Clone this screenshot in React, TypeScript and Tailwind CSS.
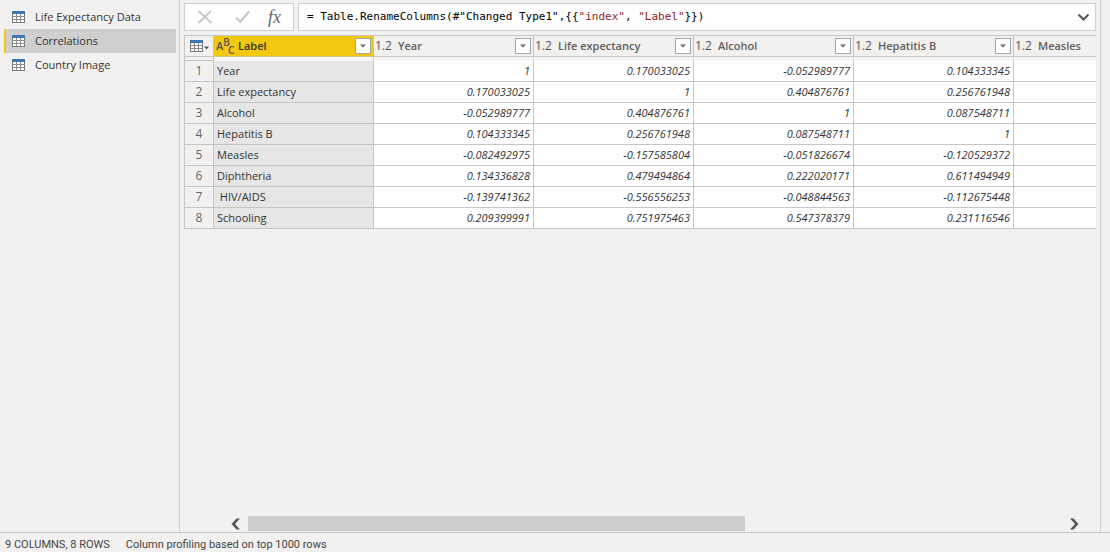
import React from 'react';

const queries = ['Life Expectancy Data', 'Correlations', 'Country Image'];
const numericColumns = ['Year', 'Life expectancy', 'Alcohol', 'Hepatitis B', 'Measles'];

const rows: { label: string; values: string[] }[] = [
  { label: 'Year', values: ['1', '0.170033025', '-0.052989777', '0.104333345'] },
  { label: 'Life expectancy', values: ['0.170033025', '1', '0.404876761', '0.256761948'] },
  { label: 'Alcohol', values: ['-0.052989777', '0.404876761', '1', '0.087548711'] },
  { label: 'Hepatitis B', values: ['0.104333345', '0.256761948', '0.087548711', '1'] },
  { label: 'Measles', values: ['-0.082492975', '-0.157585804', '-0.051826674', '-0.120529372'] },
  { label: 'Diphtheria', values: ['0.134336828', '0.479494864', '0.222020171', '0.611494949'] },
  { label: ' HIV/AIDS', values: ['-0.139741362', '-0.556556253', '-0.048844563', '-0.112675448'] },
  { label: 'Schooling', values: ['0.209399991', '0.751975463', '0.547378379', '0.231116546'] },
];

function TableIcon() {
  return (
    <svg width="13" height="12" viewBox="0 0 13 12" className="shrink-0" aria-hidden="true">
      <rect x="0.5" y="0.5" width="12" height="11" fill="#fff" stroke="#777" />
      <path d="M0 5.5h13M0 8.5h13M4.5 3v9M8.5 3v9" stroke="#8a8a8a" fill="none" />
      <rect width="13" height="3" fill="#3f76ad" />
    </svg>
  );
}

function FilterButton({ column }: { column: string }) {
  return (
    <button
      type="button"
      aria-label={`Filter ${column}`}
      className="ml-auto flex size-4 shrink-0 items-center justify-center border border-[#a6a6a6] bg-white"
    >
      <svg width="6" height="4" viewBox="0 0 6 4" aria-hidden="true">
        <path d="M0 0.4h6L3 3.6z" fill="#666" />
      </svg>
    </button>
  );
}

function Sidebar() {
  return (
    <nav aria-label="Queries" className="w-45 shrink-0 border-r border-[#cfcdcb] pt-[5px] pr-[3px] pl-1">
      <ul>
        {queries.map((name) => {
          const selected = name === 'Correlations';
          return (
            <li key={name}>
              <button
                type="button"
                aria-pressed={selected}
                className={
                  selected
                    ? 'flex h-6 w-full items-center gap-[10px] border-l-2 border-[#f2c811] bg-[#d0cfcd] pl-[6px] text-left text-[11px]'
                    : 'flex h-6 w-full items-center gap-[10px] border-l-2 border-transparent pl-[6px] text-left text-[11px]'
                }
              >
                <TableIcon />
                {name}
              </button>
            </li>
          );
        })}
      </ul>
    </nav>
  );
}

function FormulaBar() {
  return (
    <div className="flex h-7 gap-1">
      <div className="flex w-[110px] shrink-0 items-center justify-between border border-[#d0cecc] bg-white px-3">
        <button type="button" aria-label="Cancel">
          <svg width="16" height="14" viewBox="0 0 16 14" fill="none" aria-hidden="true">
            <path d="M1.5 1l13 12M14 1L1.5 13" stroke="#c8c8c8" strokeWidth="1.9" />
          </svg>
        </button>
        <button type="button" aria-label="Apply" className="pl-1">
          <svg width="15" height="14" viewBox="0 0 15 14" fill="none" aria-hidden="true">
            <path d="M1 7.5l4.2 4.3L14 1.5" stroke="#c8c8c8" strokeWidth="2.3" />
          </svg>
        </button>
        <button
          type="button"
          aria-label="Insert step"
          className="font-['Liberation_Serif',serif] text-lg leading-6 text-[#666] italic"
        >
          fx
        </button>
      </div>
      <div className="flex min-w-0 flex-1 items-center border border-[#d0cecc] bg-white pr-[5px] pl-2">
        <code className="font-['DejaVu_Sans_Mono',monospace] text-[11px] whitespace-pre text-black">
          = Table.RenameColumns(#"Changed Type1",{'{{'}
          <span className="text-[#8f1d1d]">"index"</span>, <span className="text-[#8f1d1d]">"Label"</span>
          {'}})'}
        </code>
        <button type="button" aria-label="Expand formula bar" className="ml-auto">
          <svg width="13" height="9" viewBox="0 0 13 9" fill="none" aria-hidden="true">
            <path d="M1.5 1.5l5 5 5-5" stroke="#555" strokeWidth="2" />
          </svg>
        </button>
      </div>
    </div>
  );
}

function DataGrid() {
  return (
    <div className="mt-1 overflow-hidden">
      <table className="w-[990px] table-fixed border-separate border-spacing-0 border-t border-l border-[#c8c6c4] text-[11px] leading-4">
        <colgroup>
          <col className="w-[29px]" />
          <col className="w-40" />
          {numericColumns.map((name) => (
            <col key={name} className="w-40" />
          ))}
        </colgroup>
        <thead>
          <tr className="h-[21px]">
            <th className="border-r border-b border-[#c8c6c4] p-0">
              <button type="button" aria-label="Table options" className="flex items-center gap-px pl-[5px]">
                <TableIcon />
                <svg width="5" height="4" viewBox="0 0 5 4" className="mt-1" aria-hidden="true">
                  <path d="M0 0.5h5L2.5 3.5z" fill="#555" />
                </svg>
              </button>
            </th>
            <th className="border-r border-b border-[#d8c47a] bg-[#f2c811] p-0">
              <div className="flex h-5 items-center pr-[2px] pl-[2px]">
                <span className="flex w-[18px] text-[10px] leading-[10px] font-semibold text-[#555]" aria-hidden="true">
                  <span className="self-center text-[11px]">A</span>
                  <span className="self-start pb-2">B</span>
                  <span className="-ml-[2px] self-end pt-2">C</span>
                </span>
                <span className="pl-1 font-semibold text-[#333]">Label</span>
                <FilterButton column="Label" />
              </div>
            </th>
            {numericColumns.map((name) => (
              <th key={name} className="border-r border-b border-[#c8c6c4] p-0">
                <div className="flex h-5 items-center pr-[2px]">
                  <span className="w-6 pl-px text-left text-xs font-normal text-[#555]">1.2</span>
                  <span className="font-semibold text-[#605e5c]">{name}</span>
                  <FilterButton column={name} />
                </div>
              </th>
            ))}
          </tr>
        </thead>
        <tbody>
          <tr className="h-1" aria-hidden="true">
            <td className="border-r border-b border-[#c8c6c4] p-0" />
            <td className="border-r border-[#d8d6d4] bg-[#f7f6f5] p-0" />
            {numericColumns.map((name) => (
              <td key={name} className="border-r border-[#d8d6d4] bg-[#f7f6f5] p-0" />
            ))}
          </tr>
          {rows.map((row, i) => (
            <tr key={row.label} className="h-[21px]">
              <th scope="row" className="border-r border-b border-[#c8c6c4] p-0 text-center text-xs font-normal text-[#666]">
                {i + 1}
              </th>
              <td className="border-r border-b border-[#c8c6c4] bg-[#e6e6e6] py-0 pr-1 pl-[3px] whitespace-pre">
                {row.label}
              </td>
              {numericColumns.map((name, c) => (
                <td key={name} className="border-r border-b border-[#c8c6c4] bg-white py-0 pr-[3px] pl-1 text-right italic">
                  {row.values[c]}
                </td>
              ))}
            </tr>
          ))}
        </tbody>
      </table>
    </div>
  );
}

function ScrollBar() {
  return (
    <div className="mt-auto mr-5 ml-[46px] flex h-[17px] items-center gap-[7px]">
      <button type="button" aria-label="Scroll left">
        <svg width="11" height="12" viewBox="0 0 11 12" aria-hidden="true">
          <path d="M6.5 0.5H10L5 6l5 5.5H6.5L1.5 6z" fill="#555" />
        </svg>
      </button>
      <div className="h-[15px] flex-1">
        <div className="h-full w-[61%] bg-[#cdcdcd]" />
      </div>
      <button type="button" aria-label="Scroll right">
        <svg width="11" height="12" viewBox="0 0 11 12" aria-hidden="true">
          <path d="M4.5 0.5H1L6 6l-5 5.5h3.5L9.5 6z" fill="#555" />
        </svg>
      </button>
    </div>
  );
}

export default function App() {
  return (
    <div className="flex min-h-screen flex-col bg-[#f2f1ef] font-['Open_Sans','Noto_Sans',sans-serif] text-[#333]">
      <div className="flex flex-1">
        <Sidebar />
        <main className="mr-[9px] flex min-w-0 flex-1 flex-col border-r border-[#cfcdcb] pt-[3px] pl-1">
          <div className="mr-1">
            <FormulaBar />
            <DataGrid />
          </div>
          <ScrollBar />
        </main>
      </div>
      <footer className="flex h-5 items-center gap-4 border-t border-[#c8c6c4] pt-[5px] pl-[5px] font-['Roboto',sans-serif] text-[11px] leading-4 text-[#444]">
        <span>9 COLUMNS, 8 ROWS</span>
        <span>Column profiling based on top 1000 rows</span>
      </footer>
    </div>
  );
}
